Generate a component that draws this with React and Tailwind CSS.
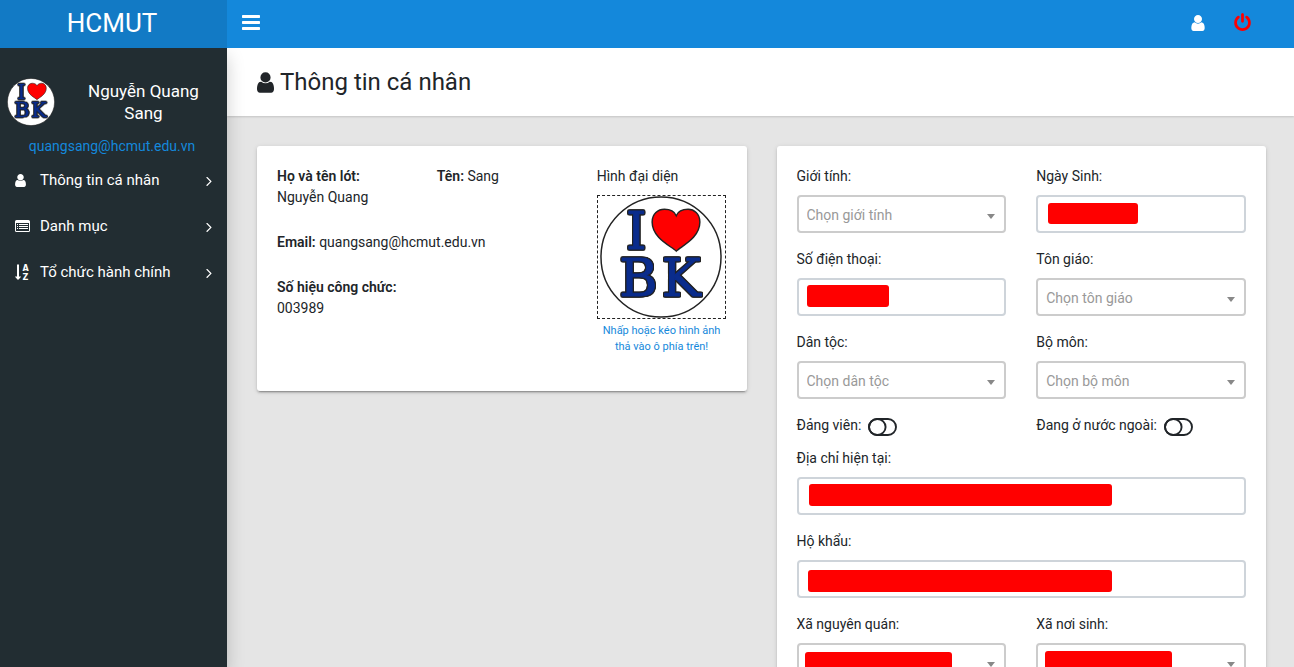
import React from 'react';

const paths = {
  user: {
    box: '256 128 1280 1536',
    d: 'M1536 1399q0 109-62.5 187t-150.5 78h-854q-88 0-150.5-78t-62.5-187q0-85 8.5-160.5t31.5-152 58.5-131 94-89 134.5-34.5q131 128 313 128t313-128q76 0 134.5 34.5t94 89 58.5 131 31.5 152 8.5 160.5zm-256-887q0 159-112.5 271.5t-271.5 112.5-271.5-112.5-112.5-271.5 112.5-271.5 271.5-112.5 271.5 112.5 112.5 271.5z',
  },
  bars: {
    box: '128 256 1536 1280',
    d: 'M1664 1344v128q0 26-19 45t-45 19h-1408q-26 0-45-19t-19-45v-128q0-26 19-45t45-19h1408q26 0 45 19t19 45zm0-512v128q0 26-19 45t-45 19h-1408q-26 0-45-19t-19-45v-128q0-26 19-45t45-19h1408q26 0 45 19t19 45zm0-512v128q0 26-19 45t-45 19h-1408q-26 0-45-19t-19-45v-128q0-26 19-45t45-19h1408q26 0 45 19t19 45z',
  },
  power: {
    box: '128 0 1536 1664',
    d: 'M1664 896q0 156-61 298t-164 245-245 164-298 61-298-61-245-164-164-245-61-298q0-182 80.5-343t226.5-270q43-32 95.5-25t83.5 50q32 42 24.5 94.5t-49.5 84.5q-98 74-151.5 181t-53.5 228q0 104 40.5 198.5t109.5 163.5 163.5 109.5 198.5 40.5 198.5-40.5 163.5-109.5 109.5-163.5 40.5-198.5q0-121-53.5-228t-151.5-181q-42-32-49.5-84.5t24.5-94.5q31-43 84-50t95 25q146 109 226.5 270t80.5 343zm-640-768v640q0 52-38 90t-90 38-90-38-38-90v-640q0-52 38-90t90-38 90 38 38 90z',
  },
  angle: {
    box: '589 483 582 976',
    d: 'M1171 960q0 13-10 23l-466 466q-10 10-23 10t-23-10l-50-50q-10-10-10-23t10-23l393-393-393-393q-10-10-10-23t10-23l50-50q10-10 23-10t23 10l466 466q10 10 10 23z',
  },
};

function Icon({ name, className }) {
  return (
    <svg viewBox={paths[name].box} className={className} fill="currentColor" aria-hidden="true">
      <path d={paths[name].d} />
    </svg>
  );
}

function ListIcon() {
  return (
    <svg viewBox="0 0 15 12" className="h-3 w-[15px]" fill="currentColor" aria-hidden="true">
      <path
        fillRule="evenodd"
        d="M1.5 0h12A1.5 1.5 0 0 1 15 1.5v9a1.5 1.5 0 0 1-1.5 1.5h-12A1.5 1.5 0 0 1 0 10.5v-9A1.5 1.5 0 0 1 1.5 0zM1 3v7.500q0 .5.5.5h12q.5 0 .5-.5V3z"
      />
      <path d="M2 4h1v1H2zM4 4h9v1H4zM2 6h1v1H2zM4 6h9v1H4zM2 8h1v1H2zM4 8h9v1H4z" />
    </svg>
  );
}

function SortIcon() {
  return (
    <svg viewBox="0 0 14 16" className="h-4 w-[14px]" fill="currentColor" aria-hidden="true">
      <path d="M2 .5h2v12h1.700q.6 0 .2.500L3.300 15.700q-.3.300-.6 0L.200 13q-.4-.5.200-.5H2z" />
      <g fontFamily="DejaVu Sans, sans-serif" fontSize="8" fontWeight="700" textAnchor="middle">
        <text x="10.500" y="6.500">A</text>
        <text x="10.500" y="15.500">Z</text>
      </g>
    </svg>
  );
}

function Logo({ className }) {
  return (
    <svg viewBox="0 0 124 124" className={className} role="img" aria-label="I love BK">
      <circle cx="62" cy="62" r="61" fill="#fff" stroke="#222" strokeWidth="1.500" />
      <g
        className="[filter:drop-shadow(1px_0_0_#222)_drop-shadow(-1px_0_0_#222)_drop-shadow(0_1px_0_#222)_drop-shadow(0_-1px_0_#222)]"
        fill="#0a2c8c"
        stroke="#0a2c8c"
        strokeWidth="1"
        strokeLinejoin="round"
        fontFamily="DejaVu Serif, serif"
        fontSize="53"
        textAnchor="middle"
      >
        <text x="37" y="54">I</text>
        <text x="39" y="101.500">B</text>
        <text x="82.500" y="101.500">K</text>
      </g>
      <path
        d="M77.500 56C72.500 51 53 43 53 26.500C53 18 59 13.500 65.500 13.500C71.500 13.500 76 16.500 77.500 20C79 16.500 83.500 13.500 89.500 13.500C95.500 13.500 101.500 18 101.500 26.500C101.500 43 82.500 51 77.500 56z"
        fill="#f00"
        stroke="#222"
        strokeWidth="1.500"
      />
    </svg>
  );
}

function Field({ id, label, select, placeholder, mask, wide }) {
  return (
    <div className={wide ? 'col-span-2 mb-4' : 'mb-4'}>
      <label htmlFor={id} className="mb-2 block">
        {label}
      </label>
      <div className="relative">
        {select ? (
          <>
            <select
              id={id}
              defaultValue=""
              className="block h-[38px] w-full appearance-none rounded border-2 border-[#ccc] bg-white px-2 pt-[2px] text-[#999] outline-none"
            >
              <option value="">{placeholder}</option>
            </select>
            <span className="pointer-events-none absolute top-[19px] right-[11px] border-x-4 border-t-[5px] border-x-transparent border-t-[#888]" />
          </>
        ) : (
          <input
            id={id}
            type="text"
            className="block h-[38px] w-full rounded border-2 border-[#ced4da] bg-white px-3 outline-none"
          />
        )}
        {mask && <span className={`absolute rounded-[3px] bg-[#f00] ${mask}`} />}
      </div>
    </div>
  );
}

function Toggle({ label }) {
  return (
    <label className="mb-3 flex h-[21px] items-center gap-[7px]">
      {label}
      <input type="checkbox" className="peer sr-only" />
      <svg viewBox="0 0 29 18" className="mt-[2px] h-[18px] w-[29px] shrink-0" fill="none" stroke="currentColor" strokeWidth="1.900" aria-hidden="true">
        <rect x="1" y="1" width="27" height="16" rx="8" />
        <ellipse cx="9.300" cy="9" rx="8.300" ry="8" />
      </svg>
    </label>
  );
}

const menu = [
  { text: 'Thông tin cá nhân', icon: <Icon name="user" className="h-[13px] w-[11px]" /> },
  { text: 'Danh mục', icon: <ListIcon /> },
  { text: 'Tổ chức hành chính', icon: <SortIcon /> },
];

const cardClass = 'rounded-[3px] bg-white p-5 shadow-[0_2px_2px_0_rgba(0,0,0,0.14),0_3px_1px_-2px_rgba(0,0,0,0.2),0_1px_5px_0_rgba(0,0,0,0.12)]';

export default function App() {
  return (
    <div className="flex h-screen flex-col overflow-hidden bg-[#e5e5e5] font-['Roboto',sans-serif] text-[14px] leading-[21px] text-[#212529]">
      <header className="z-20 flex h-12 shrink-0 bg-[#1488db] text-white">
        <a href="#" className="flex w-[227px] shrink-0 items-center justify-center bg-[#127ac5] pr-[3px] pb-[2px] text-[26px] leading-10">
          HCMUT
        </a>
        <div className="flex flex-1 items-center justify-between pr-[43px] pl-[15px]">
          <button type="button" aria-label="Menu" className="pb-[3px]">
            <Icon name="bars" className="h-[15px] w-[18px]" />
          </button>
          <div className="flex items-center gap-[29px] pb-[2px]">
            <a href="#" aria-label="Thông tin cá nhân">
              <Icon name="user" className="h-4 w-[14px]" />
            </a>
            <button type="button" aria-label="Đăng xuất" className="pb-[2px] text-[#f00]">
              <Icon name="power" className="h-[18px] w-[17px]" />
            </button>
          </div>
        </div>
      </header>

      <div className="flex min-h-0 flex-1">
        <aside className="z-10 w-[227px] shrink-0 bg-[#222d32] pt-[30px] text-white shadow-[0_8px_17px_rgba(0,0,0,0.2)]">
          <div className="flex items-center pr-[7px] pl-[7px]">
            <Logo className="size-12 shrink-0" />
            <p className="ml-3 flex-1 px-4 text-center text-[17px] leading-[22px]">Nguyễn Quang Sang</p>
          </div>
          <p className="mt-[10px] pr-[3px] text-center">
            <a href="#" className="text-[#1488db]">quangsang@hcmut.edu.vn</a>
          </p>
          <nav>
            <ul>
              {menu.map((item) => (
                <li key={item.text}>
                  <a href="#" className="flex h-[46px] items-center pr-[15px] pl-[15px] text-[15px] leading-[22px]">
                    <span className="flex w-[25px] shrink-0">{item.icon}</span>
                    <span className="flex-1">{item.text}</span>
                    <Icon name="angle" className="mt-[2px] h-[9px] w-[6px]" />
                  </a>
                </li>
              ))}
            </ul>
          </nav>
        </aside>

        <main className="min-w-0 flex-1 overflow-y-auto [scrollbar-width:none]">
          <div className="flex h-[68px] items-center bg-white px-[30px] shadow-[0_1px_2px_rgba(0,0,0,0.15)]">
            <h1 className="flex items-center gap-[6px] text-[24px] leading-[29px]">
              <Icon name="user" className="h-[21px] w-[17px]" />
              Thông tin cá nhân
            </h1>
          </div>

          <div className="grid grid-cols-2 items-start gap-[30px] py-[30px] pr-7 pl-[30px]">
            <section className={cardClass}>
              <div className="grid min-h-[205px] grid-cols-3 gap-x-[30px]">
                <div className="col-span-2 grid grid-cols-2 content-start gap-x-[30px] gap-y-6">
                  <p>
                    <b className="font-semibold">Họ và tên lót:</b>
                    <br />
                    Nguyễn Quang
                  </p>
                  <p>
                    <b className="font-semibold">Tên:</b> Sang
                  </p>
                  <p className="col-span-2">
                    <b className="font-semibold">Email:</b> quangsang@hcmut.edu.vn
                  </p>
                  <p>
                    <b className="font-semibold">Số hiệu công chức:</b>
                    <br />
                    003989
                  </p>
                </div>
                <div>
                  <label htmlFor="avatar" className="block cursor-pointer">
                    <span className="mb-2 block">Hình đại diện</span>
                    <span className="flex h-[124px] items-center justify-center border border-dashed border-[#222] pr-[2px]">
                      <Logo className="size-[122px]" />
                    </span>
                    <span className="mt-1 block text-center text-[11px] leading-4 text-[#1488db]">
                      Nhấp hoặc kéo hình ảnh thả vào ô phía trên!
                    </span>
                  </label>
                  <input id="avatar" type="file" accept="image/*" className="sr-only" />
                </div>
              </div>
            </section>

            <section className={cardClass}>
              <form className="grid grid-cols-2 gap-x-[30px]">
                <Field id="gender" label="Giới tính:" select placeholder="Chọn giới tính" />
                <Field id="birthday" label="Ngày Sinh:" mask="top-2 left-3 h-[21px] w-[90px]" />
                <Field id="phone" label="Số điện thoại:" mask="top-[7px] left-[10px] h-[22px] w-[82px]" />
                <Field id="religion" label="Tôn giáo:" select placeholder="Chọn tôn giáo" />
                <Field id="ethnicity" label="Dân tộc:" select placeholder="Chọn dân tộc" />
                <Field id="department" label="Bộ môn:" select placeholder="Chọn bộ môn" />
                <Toggle label="Đảng viên:" />
                <Toggle label="Đang ở nước ngoài:" />
                <Field id="address" label="Địa chỉ hiện tại:" wide mask="top-[7px] left-3 h-[22px] w-[303px]" />
                <Field id="household" label="Hộ khẩu:" wide mask="top-[10px] left-[11px] h-[22px] w-[304px]" />
                <Field id="origin" label="Xã nguyên quán:" select mask="top-[9px] left-2 h-[22px] w-[147px]" />
                <Field id="birthplace" label="Xã nơi sinh:" select mask="top-2 left-[9px] h-[22px] w-[127px]" />
              </form>
            </section>
          </div>
        </main>
      </div>
    </div>
  );
}
